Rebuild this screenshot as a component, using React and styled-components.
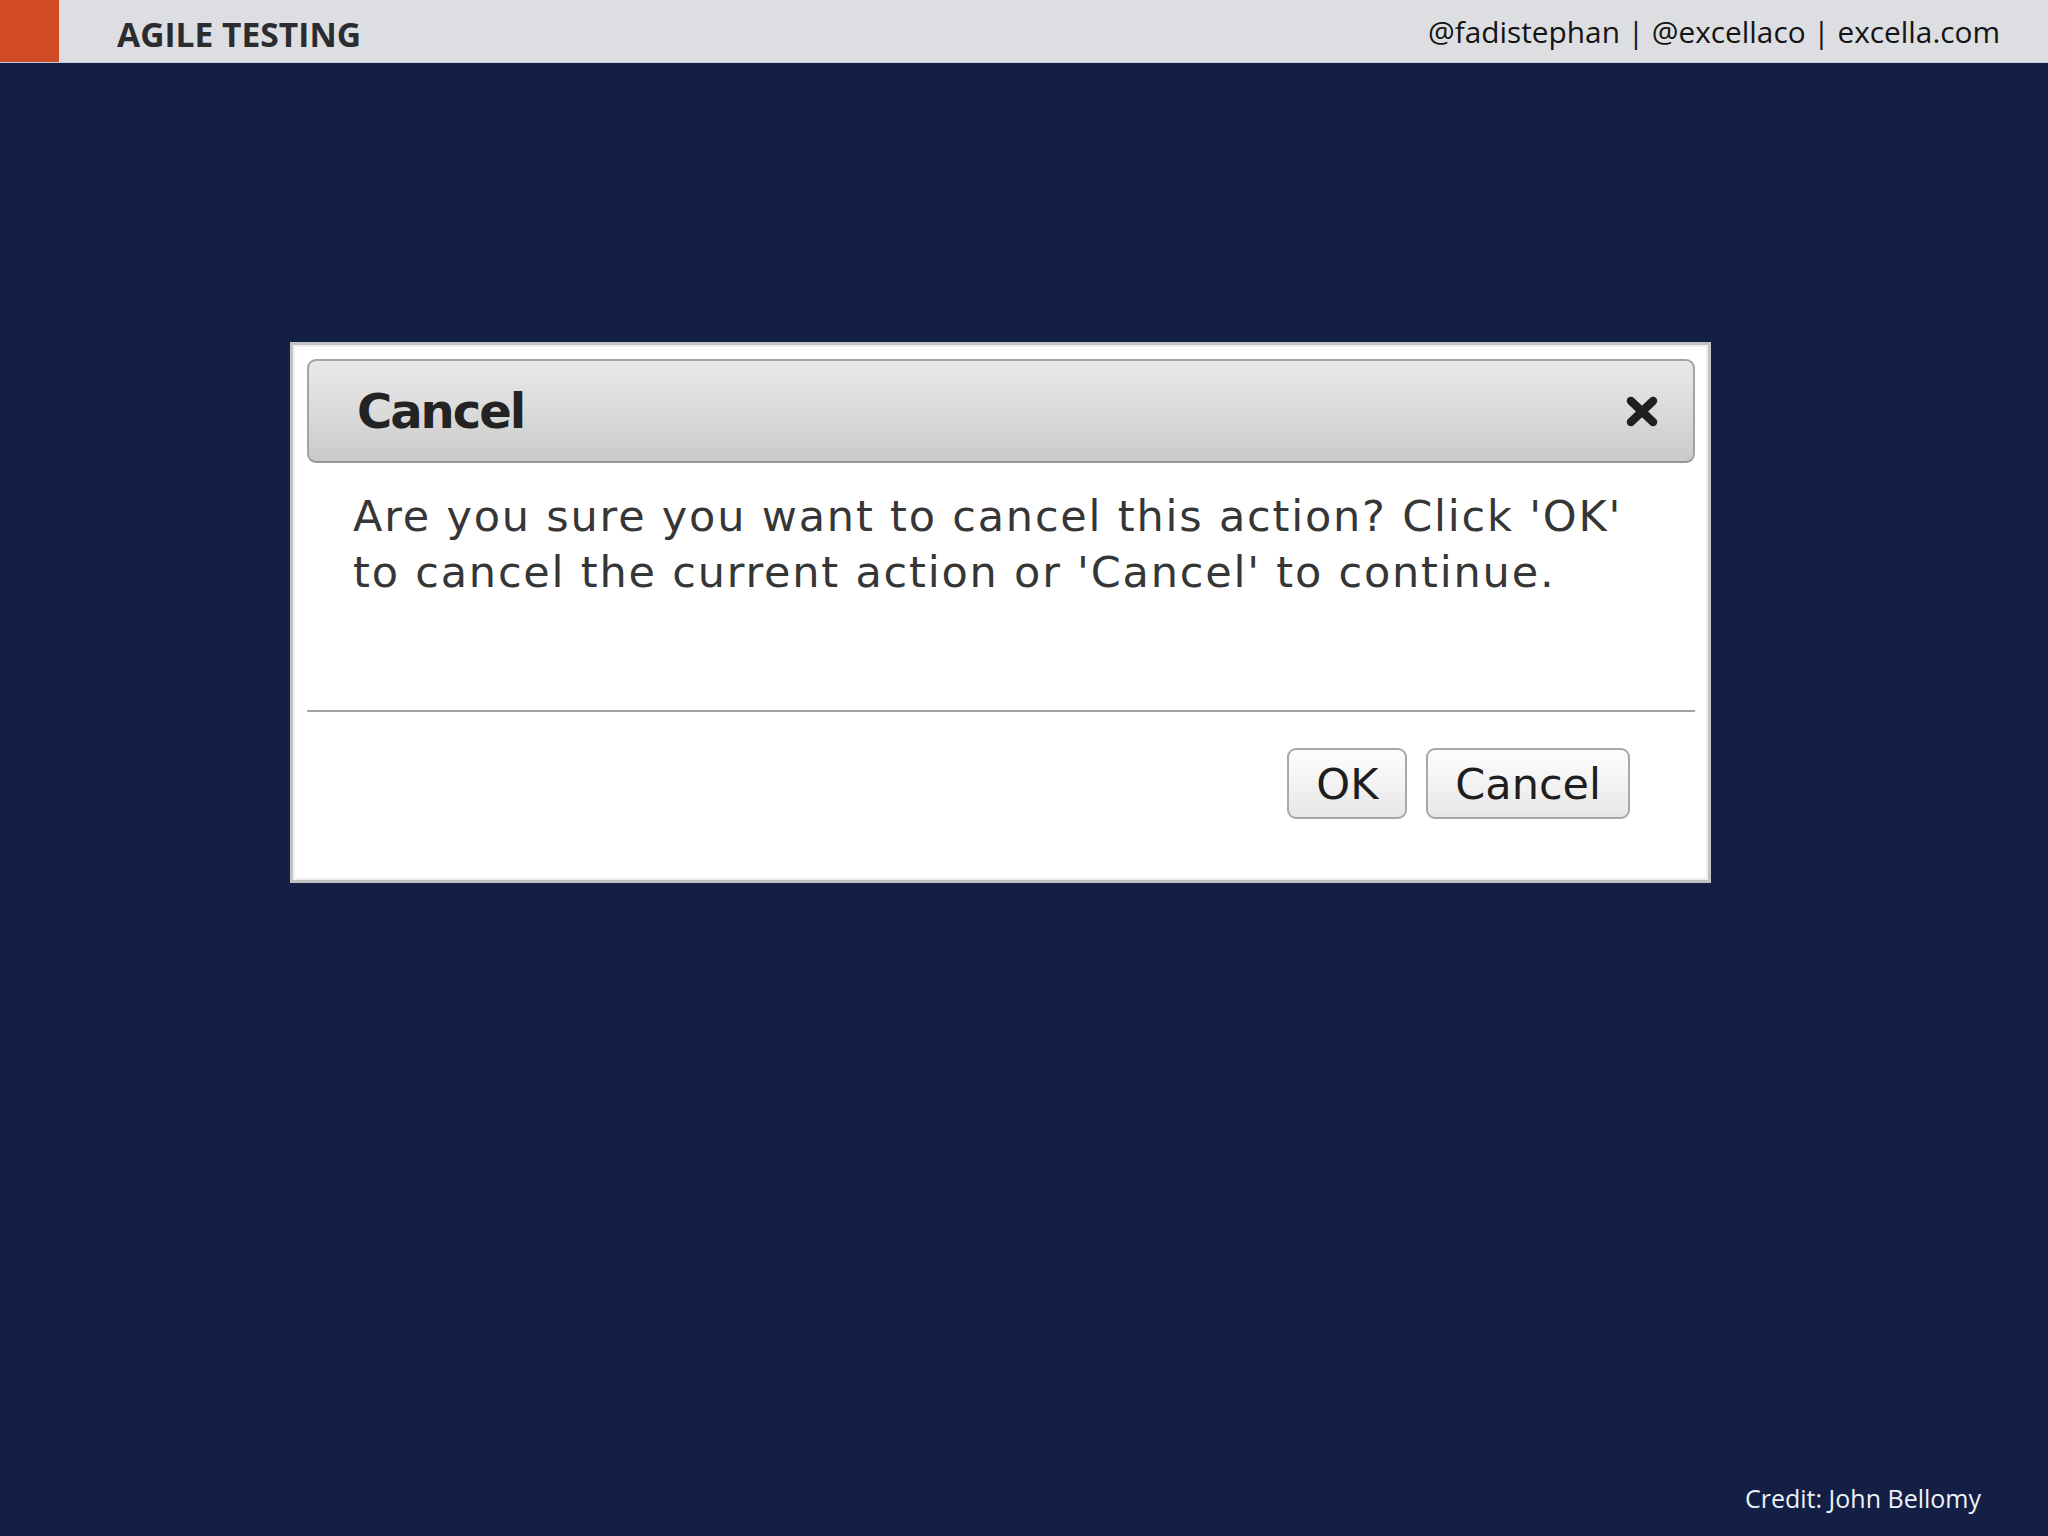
import React from "react";
import styled, { createGlobalStyle } from "styled-components";

const GlobalStyle = createGlobalStyle`
  html, body { margin: 0; padding: 0; }
  body { background: #131f44; }
  #root { min-height: 100vh; }
`;

const Page = styled.div`
  min-height: 100vh;
  display: flex;
  flex-direction: column;
  background: #131f44;
`;

const Header = styled.header`
  display: flex;
  align-items: center;
  height: 62px;
  background: #dcdee1;
  border-bottom: 1px solid #c3cadb;
`;

const Accent = styled.div`
  align-self: stretch;
  width: 59px;
  background: #d14b26;
`;

const DeckTitle = styled.div`
  margin-left: 58px;
  padding-top: 6px;
  font-family: "Open Sans", "Liberation Sans", sans-serif;
  font-weight: 700;
  font-size: 33.6px;
  color: #2a2c30;
  white-space: nowrap;
`;

const Handles = styled.div`
  margin-left: auto;
  padding-right: 48px;
  padding-top: 1px;
  font-family: "Open Sans", "Liberation Sans", sans-serif;
  font-weight: 400;
  font-size: 29.8px;
  color: #141414;
  white-space: nowrap;
`;

const Stage = styled.main`
  flex: 1;
  display: flex;
  flex-direction: column;
`;

const Dialog = styled.section`
  box-sizing: border-box;
  margin-top: 279px;
  margin-left: 290px;
  width: 1421px;
  height: 541px;
  background: #ffffff;
  border: 3px solid #c2c2c2;
  box-shadow: inset 0 0 0 2px #f0f0f0;
  padding: 14px 13px 0 14px;
  display: flex;
  flex-direction: column;
`;

const TitleBar = styled.div`
  box-sizing: border-box;
  height: 104px;
  display: flex;
  align-items: center;
  padding: 0 34px 0 48px;
  border: 2px solid #a3a3a3;
  border-bottom-color: #979797;
  border-radius: 9px;
  background: linear-gradient(#e9e9e9, #d9d9d9 55%, #cacaca);
`;

const TitleText = styled.h2`
  margin: 0;
  font-family: "DejaVu Sans", Verdana, sans-serif;
  font-weight: 700;
  font-size: 48px;
  letter-spacing: -2px;
  color: #232323;
`;

const CloseButton = styled.button`
  margin-left: auto;
  padding: 0;
  border: 0;
  background: none;
  display: flex;
  width: 34px;
  height: 31px;
`;

const Body = styled.div`
  height: 247px;
  box-sizing: border-box;
  padding: 25px 20px 0 46px;
`;

const Message = styled.p`
  margin: 0;
  font-family: "DejaVu Sans", Verdana, sans-serif;
  font-size: 43px;
  line-height: 56px;
  letter-spacing: 1.8px;
  color: #363636;
  white-space: nowrap;
`;

const Separator = styled.hr`
  margin: 0;
  border: 0;
  height: 2px;
  background: #a4a4a4;
`;

const Footer = styled.div`
  display: flex;
  justify-content: flex-end;
  gap: 19px;
  padding: 36px 65px 0 0;
`;

const Button = styled.button`
  box-sizing: border-box;
  height: 71px;
  padding: 0 27px;
  border: 2px solid #a8a8a8;
  border-radius: 9px;
  background: linear-gradient(#fdfdfd, #f3f3f3 50%, #e6e6e6);
  font-family: "DejaVu Sans", Verdana, sans-serif;
  font-size: 43px;
  color: #1e1e1e;
  display: flex;
  align-items: center;
  justify-content: center;
`;

const Credit = styled.div`
  margin-top: auto;
  align-self: flex-end;
  padding: 0 67px 21px 0;
  font-family: "Open Sans", "Liberation Sans", sans-serif;
  font-size: 25px;
  color: #eef1f7;
`;

function CloseIcon() {
  return (
    <svg width="34" height="31" viewBox="0 0 34 31">
      <path
        d="M6 5 L28 26 M28 5 L6 26"
        stroke="#1f1f1f"
        strokeWidth="8.5"
        strokeLinecap="round"
        fill="none"
      />
    </svg>
  );
}

export default function App() {
  return (
    <>
      <GlobalStyle />
      <Page>
        <Header>
          <Accent />
          <DeckTitle>AGILE TESTING</DeckTitle>
          <Handles>@fadistephan | @excellaco | excella.com</Handles>
        </Header>
        <Stage>
          <Dialog>
            <TitleBar>
              <TitleText>Cancel</TitleText>
              <CloseButton aria-label="Close">
                <CloseIcon />
              </CloseButton>
            </TitleBar>
            <Body>
              <Message>
                Are you sure you want to cancel this action? Click 'OK'
                <br />
                to cancel the current action or 'Cancel' to continue.
              </Message>
            </Body>
            <Separator />
            <Footer>
              <Button>OK</Button>
              <Button>Cancel</Button>
            </Footer>
          </Dialog>
          <Credit>Credit: John Bellomy</Credit>
        </Stage>
      </Page>
    </>
  );
}
